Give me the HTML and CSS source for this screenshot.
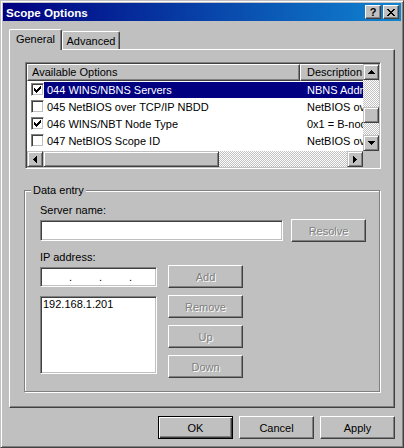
FILE: index.html
```html
<!DOCTYPE html>
<html>
<head>
<meta charset="utf-8">
<title>Scope Options</title>
<link rel="stylesheet" href="styles.css">
</head>
<body>
<div class="window">
  <div class="titlebar">
    <span class="title">Scope Options</span>
    <div class="tbtns">
      <span class="tbtn help">?</span>
      <span class="tbtn close"><svg width="8" height="7" viewBox="0 0 8 7" shape-rendering="crispEdges"><path d="M0 0h2v1h-2zM6 0h2v1h-2zM1 1h2v1h-2zM5 1h2v1h-2zM2 2h4v1h-4zM3 3h2v1h-2zM2 4h4v1h-4zM1 5h2v1h-2zM5 5h2v1h-2zM0 6h2v1h-2zM6 6h2v1h-2z" fill="#000"/></svg></span>
    </div>
  </div>

  <div class="tabs">
    <div class="tab active">General</div>
    <div class="tab">Advanced</div>
  </div>

  <div class="panel">
    <div class="listview sunken">
      <div class="lv-main">
        <div class="lv-content">
          <div class="lv-header">
            <div class="hcol c1">Available Options</div>
            <div class="hcol c2">Description</div>
          </div>
          <div class="row sel">
            <span class="cb"><svg width="7" height="7" viewBox="0 0 7 7" shape-rendering="crispEdges"><path d="M6 0h1v3h-1zM5 1h1v3h-1zM4 2h1v3h-1zM0 2h1v3h-1zM1 3h1v3h-1zM2 4h1v3h-1zM3 3h1v3h-1z" fill="#000"/></svg></span>
            <div class="rowtext"><span class="name">044 WINS/NBNS Servers</span><span class="desc">NBNS Addresses</span></div>
          </div>
          <div class="row">
            <span class="cb"></span>
            <div class="rowtext"><span class="name">045 NetBIOS over TCP/IP NBDD</span><span class="desc">NetBIOS over</span></div>
          </div>
          <div class="row">
            <span class="cb"><svg width="7" height="7" viewBox="0 0 7 7" shape-rendering="crispEdges"><path d="M6 0h1v3h-1zM5 1h1v3h-1zM4 2h1v3h-1zM0 2h1v3h-1zM1 3h1v3h-1zM2 4h1v3h-1zM3 3h1v3h-1z" fill="#000"/></svg></span>
            <div class="rowtext"><span class="name">046 WINS/NBT Node Type</span><span class="desc">0x1 = B-node</span></div>
          </div>
          <div class="row">
            <span class="cb"></span>
            <div class="rowtext"><span class="name">047 NetBIOS Scope ID</span><span class="desc">NetBIOS over</span></div>
          </div>
        </div>
        <div class="vscroll">
          <div class="sbtn"><svg width="7" height="4" viewBox="0 0 7 4" shape-rendering="crispEdges"><path d="M3 0h1v1h-1zM2 1h3v1h-3zM1 2h5v1h-5zM0 3h7v1h-7z" fill="#000"/></svg></div>
          <div class="track vt1"></div>
          <div class="sbtn"></div>
          <div class="track vt2"></div>
          <div class="sbtn"><svg width="7" height="4" viewBox="0 0 7 4" shape-rendering="crispEdges"><path d="M0 0h7v1h-7zM1 1h5v1h-5zM2 2h3v1h-3zM3 3h1v1h-1z" fill="#000"/></svg></div>
        </div>
      </div>
      <div class="lv-bottom">
        <div class="hscroll">
          <div class="sbtn"><svg width="4" height="7" viewBox="0 0 4 7" shape-rendering="crispEdges"><path d="M0 3h1v1h-1zM1 2h1v3h-1zM2 1h1v5h-1zM3 0h1v7h-1z" fill="#000"/></svg></div>
          <div class="sbtn hthumb"></div>
          <div class="track htrack"></div>
          <div class="sbtn"><svg width="4" height="7" viewBox="0 0 4 7" shape-rendering="crispEdges"><path d="M0 0h1v7h-1zM1 1h1v5h-1zM2 2h1v3h-1zM3 3h1v1h-1z" fill="#000"/></svg></div>
        </div>
        <div class="corner"></div>
      </div>
    </div>

    <div class="group">
      <div class="legend">Data entry</div>
      <div class="lbl lbl1">Server name:</div>
      <div class="row1">
        <div class="field sunken server"></div>
        <div class="btn disabled resolve">Resolve</div>
      </div>
      <div class="lbl lbl2">IP address:</div>
      <div class="row2">
        <div class="leftcol">
          <div class="field sunken ipfield">
            <span class="seg"></span><span class="dot">.</span><span class="seg"></span><span class="dot">.</span><span class="seg"></span><span class="dot">.</span><span class="seg"></span>
          </div>
          <div class="field sunken iplist">192.168.1.201</div>
        </div>
        <div class="btncol">
          <div class="btn disabled">Add</div>
          <div class="btn disabled">Remove</div>
          <div class="btn disabled">Up</div>
          <div class="btn disabled">Down</div>
        </div>
      </div>
    </div>
  </div>

  <div class="footer">
    <div class="btn default">OK</div>
    <div class="btn">Cancel</div>
    <div class="btn">Apply</div>
  </div>
</div>
</body>
</html>
```

FILE: styles.css
```css
body {
  margin: 0;
  font-family: "Liberation Sans", Arial, sans-serif;
  font-size: 11px;
  color: #000;
  background: #c0c0c0;
}

.window {
  box-sizing: border-box;
  width: 404px;
  height: 448px;
  border: 1px solid;
  border-color: #c0c0c0 #404040 #404040 #c0c0c0;
  box-shadow: inset 1px 1px #fff, inset -1px -1px #808080;
  padding: 2px;
  background: #c0c0c0;
  display: flex;
  flex-direction: column;
}

.titlebar {
  height: 18px;
  flex: none;
  background: linear-gradient(90deg, #000080, #1084d0);
  display: flex;
  align-items: center;
  padding: 0 2px 0 3px;
  color: #fff;
}

.title {
  flex: 1;
  font-weight: bold;
  font-size: 11.6px;
}

.tbtns {
  display: flex;
  gap: 2px;
}

.tbtn {
  box-sizing: border-box;
  width: 16px;
  height: 14px;
  background: #c0c0c0;
  border: 1px solid;
  border-color: #fff #404040 #404040 #fff;
  box-shadow: inset -1px -1px #808080;
  display: flex;
  align-items: center;
  justify-content: center;
  color: #000;
  font-weight: bold;
  font-size: 11px;
  line-height: 12px;
}

.tabs {
  display: flex;
  align-items: flex-end;
  height: 20px;
  flex: none;
  margin-top: 8px;
  padding-left: 6px;
}

.tab {
  box-sizing: border-box;
  width: 58px;
  height: 18px;
  border: 1px solid;
  border-bottom: none;
  border-color: #fff #404040 #404040 #fff;
  box-shadow: inset -1px 0 #808080;
  border-radius: 2px 2px 0 0;
  padding-top: 2px;
  text-align: center;
  line-height: 14px;
  background: #c0c0c0;
}

.tab.active {
  width: 53px;
  height: 21px;
  margin-bottom: -1px;
  position: relative;
  z-index: 1;
}

.panel {
  box-sizing: border-box;
  width: 386px;
  height: 359px;
  flex: none;
  margin-left: 6px;
  border: 1px solid;
  border-color: #fff #404040 #404040 #fff;
  box-shadow: inset -1px -1px #808080;
  padding: 12px 0 0 15px;
}

.sunken {
  box-sizing: border-box;
  border: 1px solid;
  border-color: #808080 #fff #fff #808080;
  box-shadow: inset 1px 1px #404040, inset -1px -1px #c0c0c0;
  background: #fff;
}

.listview {
  width: 356px;
  height: 107px;
  padding: 1px;
  display: flex;
  flex-direction: column;
}

.lv-main {
  display: flex;
  height: 87px;
}

.lv-content {
  width: 336px;
  overflow: hidden;
}

.lv-header {
  display: flex;
  height: 17px;
}

.hcol {
  box-sizing: border-box;
  flex: none;
  height: 17px;
  border: 1px solid;
  border-color: #fff #404040 #404040 #fff;
  box-shadow: inset -1px -1px #808080;
  background: #c0c0c0;
  padding-left: 4px;
  line-height: 14px;
  white-space: nowrap;
  overflow: hidden;
}

.c1 { width: 273px; }
.c2 { width: 80px; padding-left: 6px; }

.row {
  display: flex;
  align-items: center;
  height: 17px;
}

.cb {
  box-sizing: border-box;
  flex: none;
  width: 13px;
  height: 13px;
  margin-left: 4px;
  border: 1px solid;
  border-color: #808080 #fff #fff #808080;
  box-shadow: inset 1px 1px #404040, inset -1px -1px #c0c0c0;
  background: #fff;
  display: flex;
  align-items: center;
  justify-content: center;
}

.rowtext {
  display: flex;
  align-items: center;
  flex: none;
  width: 319px;
  height: 16px;
  white-space: nowrap;
  overflow: hidden;
}

.row.sel .rowtext {
  background: #000080;
  color: #fff;
}

.name {
  box-sizing: border-box;
  flex: none;
  width: 256px;
  padding-left: 3px;
}

.desc {
  padding-left: 7px;
}

.vscroll {
  width: 16px;
  display: flex;
  flex-direction: column;
}

.sbtn {
  box-sizing: border-box;
  flex: none;
  width: 16px;
  height: 16px;
  background: #c0c0c0;
  border: 1px solid;
  border-color: #c0c0c0 #404040 #404040 #c0c0c0;
  box-shadow: inset 1px 1px #fff, inset -1px -1px #808080;
  display: flex;
  align-items: center;
  justify-content: center;
}

.track {
  background: repeating-conic-gradient(#c0c0c0 0 25%, #fff 0 50%) 0 0 / 2px 2px;
}

.vt1 { height: 27px; flex: none; }
.vt2 { flex: 1; }

.lv-bottom {
  display: flex;
  height: 16px;
}

.hscroll {
  display: flex;
  width: 336px;
}

.hthumb { width: 176px; }
.htrack { flex: 1; }

.corner {
  width: 16px;
  background: #c0c0c0;
}

.group {
  box-sizing: border-box;
  width: 356px;
  height: 202px;
  margin: 21px 0 0 -1px;
  border: 1px solid #808080;
  box-shadow: inset 1px 1px #fff, 1px 1px #fff;
  padding-left: 15px;
}

.legend {
  width: fit-content;
  margin: -7px 0 0 -9px;
  padding: 0 2px;
  background: #c0c0c0;
  line-height: 13px;
}

.lbl { line-height: 13px; }
.lbl1 { margin-top: 7px; }
.lbl2 { margin-top: 9px; }

.row1 {
  display: flex;
  align-items: center;
  height: 23px;
  margin-top: 2px;
}

.field { height: 21px; }
.server { width: 243px; }
.resolve { margin-left: 8px; }

.row2 {
  display: flex;
  gap: 11px;
  margin-top: 1px;
}

.leftcol {
  display: flex;
  flex-direction: column;
  width: 117px;
}

.ipfield {
  margin-top: 2px;
  height: 20px;
  display: flex;
  align-items: center;
  padding-left: 1px;
}

.seg { width: 27px; flex: none; }
.dot { width: 3px; flex: none; text-align: center; line-height: 13px; }

.iplist {
  margin-top: 9px;
  height: 78px;
  padding: 1px 2px;
  line-height: 13px;
}

.btncol {
  display: flex;
  flex-direction: column;
  gap: 7px;
}

.btn {
  box-sizing: border-box;
  width: 75px;
  height: 23px;
  flex: none;
  border: 1px solid;
  border-color: #fff #404040 #404040 #fff;
  box-shadow: inset -1px -1px #808080;
  background: #c0c0c0;
  display: flex;
  align-items: center;
  justify-content: center;
}

.btn.default {
  border-color: #000;
  box-shadow: inset 1px 1px #fff, inset -1px -1px #404040, inset -2px -2px #808080;
}

.btn.disabled {
  color: #808080;
  text-shadow: 1px 1px 0 #fff;
}

.footer {
  display: flex;
  justify-content: flex-end;
  gap: 6px;
  margin-top: 8px;
  padding-right: 6px;
}
```
